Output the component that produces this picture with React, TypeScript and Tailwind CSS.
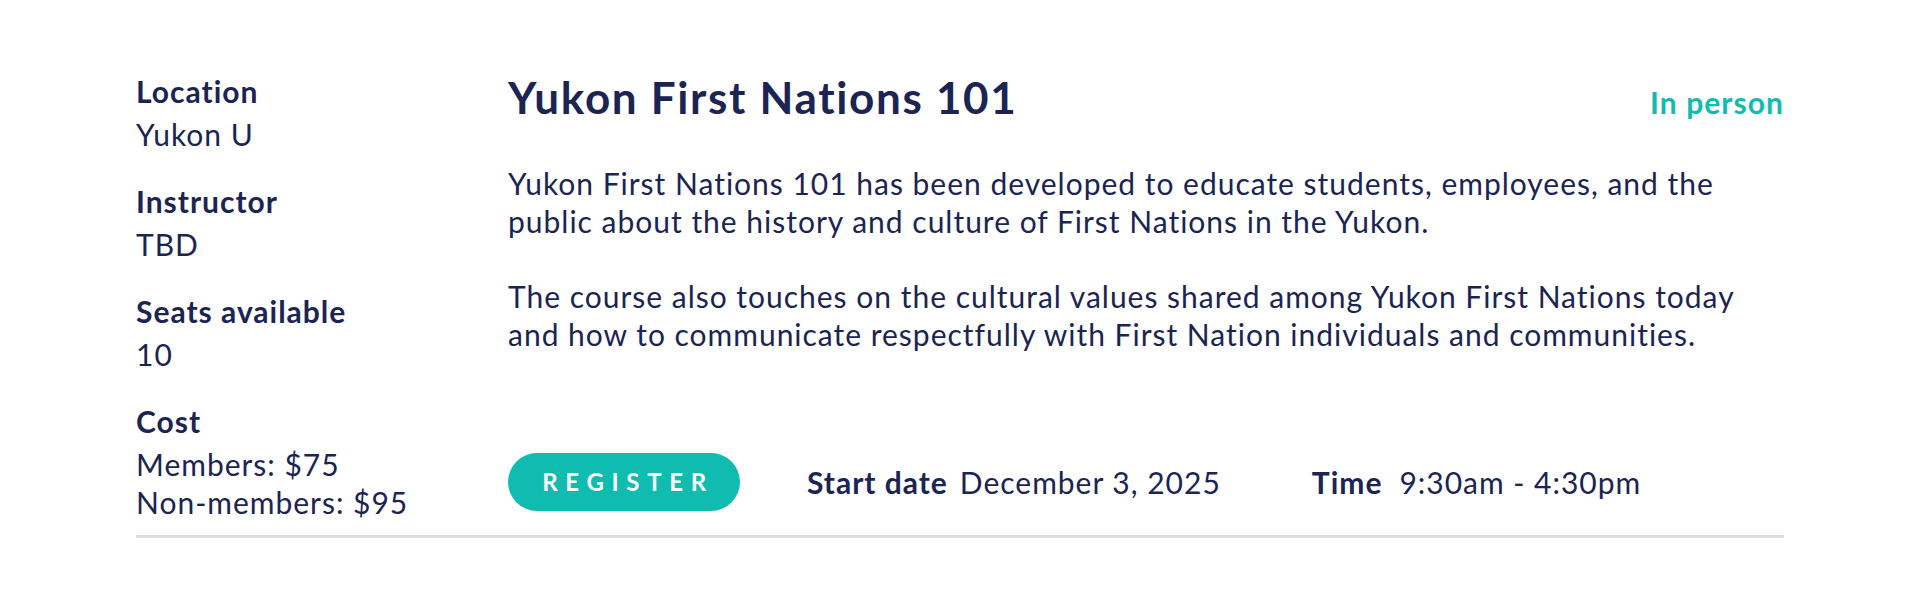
import React from "react";

const navy = "text-[#1b2453]";

function Info({ label, children, first }: { label: string; children: React.ReactNode; first?: boolean }) {
  return (
    <div className={first ? "" : "mt-[29px]"}>
      <div className="text-[30px] leading-[38px] font-bold tracking-[0.033em]">{label}</div>
      <div className="mt-[5px] text-[30px] leading-[38px] tracking-[0.033em]">{children}</div>
    </div>
  );
}

export default function App() {
  return (
    <div
      className={`w-[1920px] h-[600px] bg-white ${navy}`}
      style={{ fontFamily: "Lato, 'Noto Sans', sans-serif" }}
    >
      <div className="mx-[136px] pt-[72px] pb-[14px] border-b-[3px] border-[#dedede] flex">
        <div className="w-[372px] shrink-0">
          <Info label="Location" first>Yukon U</Info>
          <Info label="Instructor">TBD</Info>
          <Info label="Seats available">10</Info>
          <Info label="Cost">
            <div>Members: $75</div>
            <div>Non-members: $95</div>
          </Info>
        </div>
        <div className="flex-1 flex flex-col">
          <div className="flex items-baseline justify-between -mt-[1px]">
            <h1 className="text-[44px] leading-[52px] font-bold tracking-[0.038em]">Yukon First Nations 101</h1>
            <span className="text-[30px] font-bold tracking-[0.035em] text-[#10bbb0]">In person</span>
          </div>
          <div className="mt-[39px] text-[30px] leading-[38px] tracking-[0.033em]">
            <p>
              Yukon First Nations 101 has been developed to educate students, employees, and the public about the
              history and culture of First Nations in the Yukon.
            </p>
            <p className="mt-[37px]">
              The course also touches on the cultural values shared among Yukon First Nations today and how to
              communicate respectfully with First Nation individuals and communities.
            </p>
          </div>
          <div className="mt-auto mb-[10px] flex items-center">
            <button className="h-[58px] w-[232px] rounded-full bg-[#10bbb0] text-white text-[24px] font-bold tracking-[0.32em] pl-[8px] flex items-center justify-center">
              REGISTER
            </button>
            <div className="ml-[67px] text-[30px] leading-[38px] tracking-[0.033em]">
              <span className="font-bold">Start date</span>
              <span className="ml-[12px]">December 3, 2025</span>
            </div>
            <div className="ml-[91px] text-[30px] leading-[38px] tracking-[0.033em]">
              <span className="font-bold">Time</span>
              <span className="ml-[17px]">9:30am - 4:30pm</span>
            </div>
          </div>
        </div>
      </div>
    </div>
  );
}
